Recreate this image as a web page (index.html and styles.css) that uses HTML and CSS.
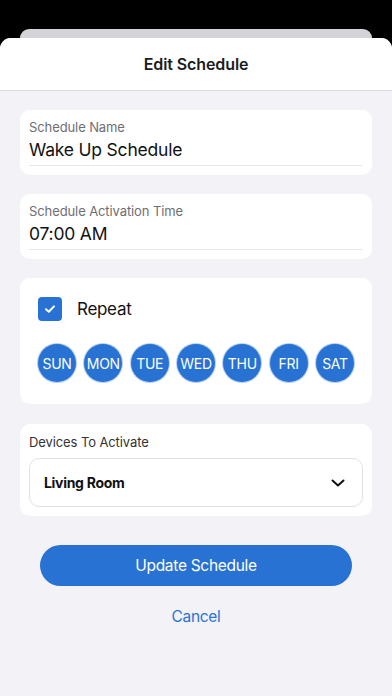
FILE: index.html
```html
<!DOCTYPE html>
<html>
<head>
<meta charset="utf-8">
<link rel="stylesheet" href="styles.css">
</head>
<body>
<div class="screen">
  <div class="back-card"></div>
  <div class="sheet">
    <header class="sheet-header">Edit Schedule</header>
    <main class="content">
      <section class="card field-card">
        <div class="field-label">Schedule Name</div>
        <div class="field-value">Wake Up Schedule</div>
      </section>
      <section class="card field-card">
        <div class="field-label">Schedule Activation Time</div>
        <div class="field-value">07:00 AM</div>
      </section>
      <section class="card repeat-card">
        <div class="repeat-row">
          <span class="checkbox">
            <svg width="12" height="10" viewBox="0 0 12 10"><path d="M2 5.2 L4.8 7.8 L10 2.4" fill="none" stroke="#fff" stroke-width="2" stroke-linecap="round" stroke-linejoin="round"/></svg>
          </span>
          <span class="repeat-label">Repeat</span>
        </div>
        <div class="days">
          <span class="day">SUN</span>
          <span class="day">MON</span>
          <span class="day">TUE</span>
          <span class="day">WED</span>
          <span class="day">THU</span>
          <span class="day">FRI</span>
          <span class="day">SAT</span>
        </div>
      </section>
      <section class="card devices-card">
        <div class="devices-label">Devices To Activate</div>
        <div class="select">
          <span class="select-value">Living Room</span>
          <svg class="chevron" width="14" height="8" viewBox="0 0 14 8"><path d="M1.5 1.5 L7 6.5 L12.5 1.5" fill="none" stroke="#111" stroke-width="2" stroke-linecap="round" stroke-linejoin="round"/></svg>
        </div>
      </section>
      <button class="primary-btn">Update Schedule</button>
      <div class="cancel">Cancel</div>
    </main>
  </div>
</div>
</body>
</html>
```

FILE: styles.css
```css
* { box-sizing: border-box; }
html, body {
  margin: 0;
  padding: 0;
  background: #000;
  font-family: Inter, "Noto Sans", "Liberation Sans", sans-serif;
}
.screen {
  width: 392px;
  height: 696px;
  padding-top: 29px;
  background: #000;
  display: flex;
  flex-direction: column;
  overflow: hidden;
}
.back-card {
  height: 9px;
  margin: 0 20px;
  background: #d3d3d8;
  border-radius: 10px 10px 0 0;
  flex: none;
}
.sheet {
  flex: 1;
  background: #f2f2f7;
  border-radius: 11px 11px 0 0;
  overflow: hidden;
  display: flex;
  flex-direction: column;
}
.sheet-header {
  height: 53px;
  flex: none;
  background: #fff;
  border-bottom: 1px solid #dcdce0;
  display: flex;
  align-items: center;
  justify-content: center;
  font-size: 16px;
  font-weight: 600;
  color: #1c1c1e;
  letter-spacing: -0.1px;
}
.content {
  padding: 19px 20px 0;
  display: flex;
  flex-direction: column;
}
.card {
  background: #fff;
  border-radius: 10px;
}
.field-card {
  padding: 9px 10px 9px 9px;
  margin-bottom: 19px;
}
.field-label {
  font-size: 13px;
  line-height: 16px;
  color: #6e6e73;
  letter-spacing: -0.1px;
}
.field-value {
  margin-top: 4px;
  font-size: 17.5px;
  line-height: 22px;
  letter-spacing: -0.2px;
  color: #111;
  padding-bottom: 4px;
  border-bottom: 1px solid #e6e6ea;
}
.repeat-card {
  padding: 19px 18px 22px;
  margin-bottom: 20px;
}
.repeat-row {
  display: flex;
  align-items: center;
  gap: 15px;
}
.checkbox {
  width: 24px;
  height: 24px;
  border-radius: 4px;
  background: #2772d2;
  display: flex;
  align-items: center;
  justify-content: center;
}
.repeat-label {
  font-size: 17px;
  letter-spacing: -0.3px;
  color: #111;
}
.days {
  margin-top: 23px;
  display: flex;
  justify-content: space-between;
}
.day {
  width: 38px;
  height: 38px;
  border-radius: 50%;
  background: #2772d2;
  box-shadow: 0 0 0 1px rgba(120, 165, 230, 0.55);
  color: #fff;
  font-size: 14px;
  display: flex;
  align-items: center;
  justify-content: center;
  letter-spacing: -0.3px;
}
.devices-card {
  padding: 9px;
}
.devices-label {
  font-size: 13px;
  line-height: 18px;
  letter-spacing: -0.1px;
  color: #333;
}
.select {
  margin-top: 7px;
  height: 49px;
  border: 1px solid #e2e2e6;
  border-radius: 10px;
  display: flex;
  align-items: center;
  justify-content: space-between;
  padding: 0 17px 0 14px;
}
.select-value {
  font-size: 14px;
  font-weight: 700;
  letter-spacing: -0.3px;
  color: #111;
}
.primary-btn {
  margin: 29px 20px 0;
  height: 41px;
  border: none;
  border-radius: 21px;
  background: #2772d2;
  color: #fff;
  font-family: inherit;
  font-size: 15.5px;
  letter-spacing: -0.3px;
}
.cancel {
  margin-top: 21px;
  text-align: center;
  font-size: 15.5px;
  line-height: 20px;
  letter-spacing: -0.3px;
  color: #2a74d4;
}
```
